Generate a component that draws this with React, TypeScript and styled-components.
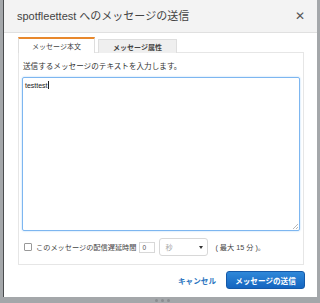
import styled, { createGlobalStyle } from "styled-components";

const GlobalStyle = createGlobalStyle`
  html, body {
    margin: 0;
    padding: 0;
    background: #a4a7aa;
    font-family: "Liberation Sans", "Noto Sans CJK JP", sans-serif;
  }
`;

const Page = styled.div`
  width: 320px;
  height: 303px;
  display: flex;
  flex-direction: column;
  align-items: flex-start;
  padding-left: 3px;
  box-sizing: border-box;
  overflow: hidden;
`;

const Dialog = styled.div`
  width: 314px;
  height: 297px;
  background: #fff;
  border-left: 1px solid #4a4c4e;
  box-sizing: border-box;
  display: flex;
  flex-direction: column;
`;

const Header = styled.div`
  height: 33px;
  background: #f3f3f3;
  border-bottom: 1px solid #e0e0e0;
  box-sizing: border-box;
  display: flex;
  align-items: center;
  justify-content: space-between;
  padding: 0 12px 0 13px;
`;

const Title = styled.h1`
  margin: 0;
  font-size: 11px;
  font-weight: 400;
  color: #444;
  line-height: 1;
`;

const Close = styled.span`
  font-size: 12px;
  color: #555;
  line-height: 1;
`;

const Body = styled.div`
  padding: 3px 12px 0 14px;
`;

const Tabs = styled.div`
  display: flex;
  align-items: flex-end;
  gap: 3px;
  height: 16px;
`;

const Tab = styled.div<{ active?: boolean }>`
  width: ${(p) => (p.active ? 77 : 79)}px;
  height: ${(p) => (p.active ? 16 : 14)}px;
  box-sizing: border-box;
  display: flex;
  align-items: center;
  justify-content: center;
  font-size: 7px;
  font-weight: ${(p) => (p.active ? 400 : 700)};
  color: #444;
  background: ${(p) => (p.active ? "#fff" : "#efefef")};
  border: 1px solid #dedede;
  border-top: ${(p) => (p.active ? "2px solid #e8882c" : "1px solid #dedede")};
  border-bottom: none;
  margin-bottom: -1px;
  position: relative;
`;

const Panel = styled.div`
  width: 286px;
  height: 213px;
  border: 1px solid #e6e6e6;
  box-sizing: border-box;
  padding: 9px 3px 0 3px;
`;

const Label = styled.div`
  font-size: 7.6px;
  color: #333;
  line-height: 10px;
  margin-left: 1px;
`;

const TextArea = styled.div`
  margin-top: 5px;
  height: 154px;
  border: 1px solid #7db6f0;
  box-shadow: 0 0 2px #a9d0f7;
  border-radius: 2px;
  box-sizing: border-box;
  padding: 3px 2px;
  font-size: 7px;
  color: #222;
  position: relative;
`;

const Caret = styled.span`
  display: inline-block;
  width: 1px;
  height: 8px;
  background: #222;
  vertical-align: -1px;
`;

const Grip = styled.svg`
  position: absolute;
  right: 1px;
  bottom: 1px;
`;

const OptionRow = styled.div`
  display: flex;
  align-items: center;
  margin-top: 7px;
  height: 18px;
  padding-left: 2px;
  font-size: 7.2px;
  color: #444;
`;

const Check = styled.span`
  width: 6px;
  height: 6px;
  border: 1px solid #999;
  border-radius: 1px;
  margin-right: 4px;
`;

const NumInput = styled.span`
  width: 16px;
  height: 11px;
  box-sizing: border-box;
  border: 1px solid #d8d8d8;
  margin-left: 3px;
  font-size: 6.5px;
  color: #555;
  display: flex;
  align-items: center;
  padding-left: 2px;
`;

const Select = styled.span`
  width: 49px;
  height: 18px;
  box-sizing: border-box;
  border: 1px solid #d8d8d8;
  border-radius: 3px;
  margin-left: 4px;
  display: flex;
  align-items: center;
  justify-content: space-between;
  padding: 0 4px 0 5px;
  color: #aaa;
`;

const Arrow = styled.span`
  width: 0;
  height: 0;
  border-left: 2.5px solid transparent;
  border-right: 2.5px solid transparent;
  border-top: 3px solid #333;
`;

const Note = styled.span`
  margin-left: 7px;
`;

const Footer = styled.div`
  display: flex;
  align-items: center;
  justify-content: flex-end;
  gap: 10px;
  padding-top: 6px;
`;

const Cancel = styled.span`
  font-size: 7.6px;
  font-weight: 700;
  color: #2a74c0;
`;

const Primary = styled.span`
  width: 79px;
  height: 18px;
  border-radius: 3px;
  background: linear-gradient(#2f88d9, #1565c0);
  border: 1px solid #1559a8;
  box-sizing: border-box;
  color: #fff;
  font-size: 7.6px;
  font-weight: 700;
  display: flex;
  align-items: center;
  justify-content: center;
`;

const Dots = styled.div`
  display: flex;
  gap: 3px;
  margin: 2px 0 0 152px;
`;

const Dot = styled.span`
  width: 3px;
  height: 3px;
  border-radius: 50%;
  background: #8a8d90;
`;

export default function App() {
  return (
    <>
      <GlobalStyle />
      <Page>
        <Dialog>
          <Header>
            <Title>spotfleettest へのメッセージの送信</Title>
            <Close>✕</Close>
          </Header>
          <Body>
            <Tabs>
              <Tab active>メッセージ本文</Tab>
              <Tab>メッセージ属性</Tab>
            </Tabs>
            <Panel>
              <Label>送信するメッセージのテキストを入力します。</Label>
              <TextArea>
                testtest
                <Caret />
                <Grip width="6" height="6" viewBox="0 0 6 6">
                  <path d="M6 1L1 6M6 4L4 6" stroke="#999" strokeWidth="0.7" />
                </Grip>
              </TextArea>
              <OptionRow>
                <Check />
                このメッセージの配信遅延時間
                <NumInput>0</NumInput>
                <Select>
                  秒
                  <Arrow />
                </Select>
                <Note>( 最大 15 分 )。</Note>
              </OptionRow>
            </Panel>
            <Footer>
              <Cancel>キャンセル</Cancel>
              <Primary>メッセージの送信</Primary>
            </Footer>
          </Body>
        </Dialog>
        <Dots>
          <Dot />
          <Dot />
          <Dot />
        </Dots>
      </Page>
    </>
  );
}
